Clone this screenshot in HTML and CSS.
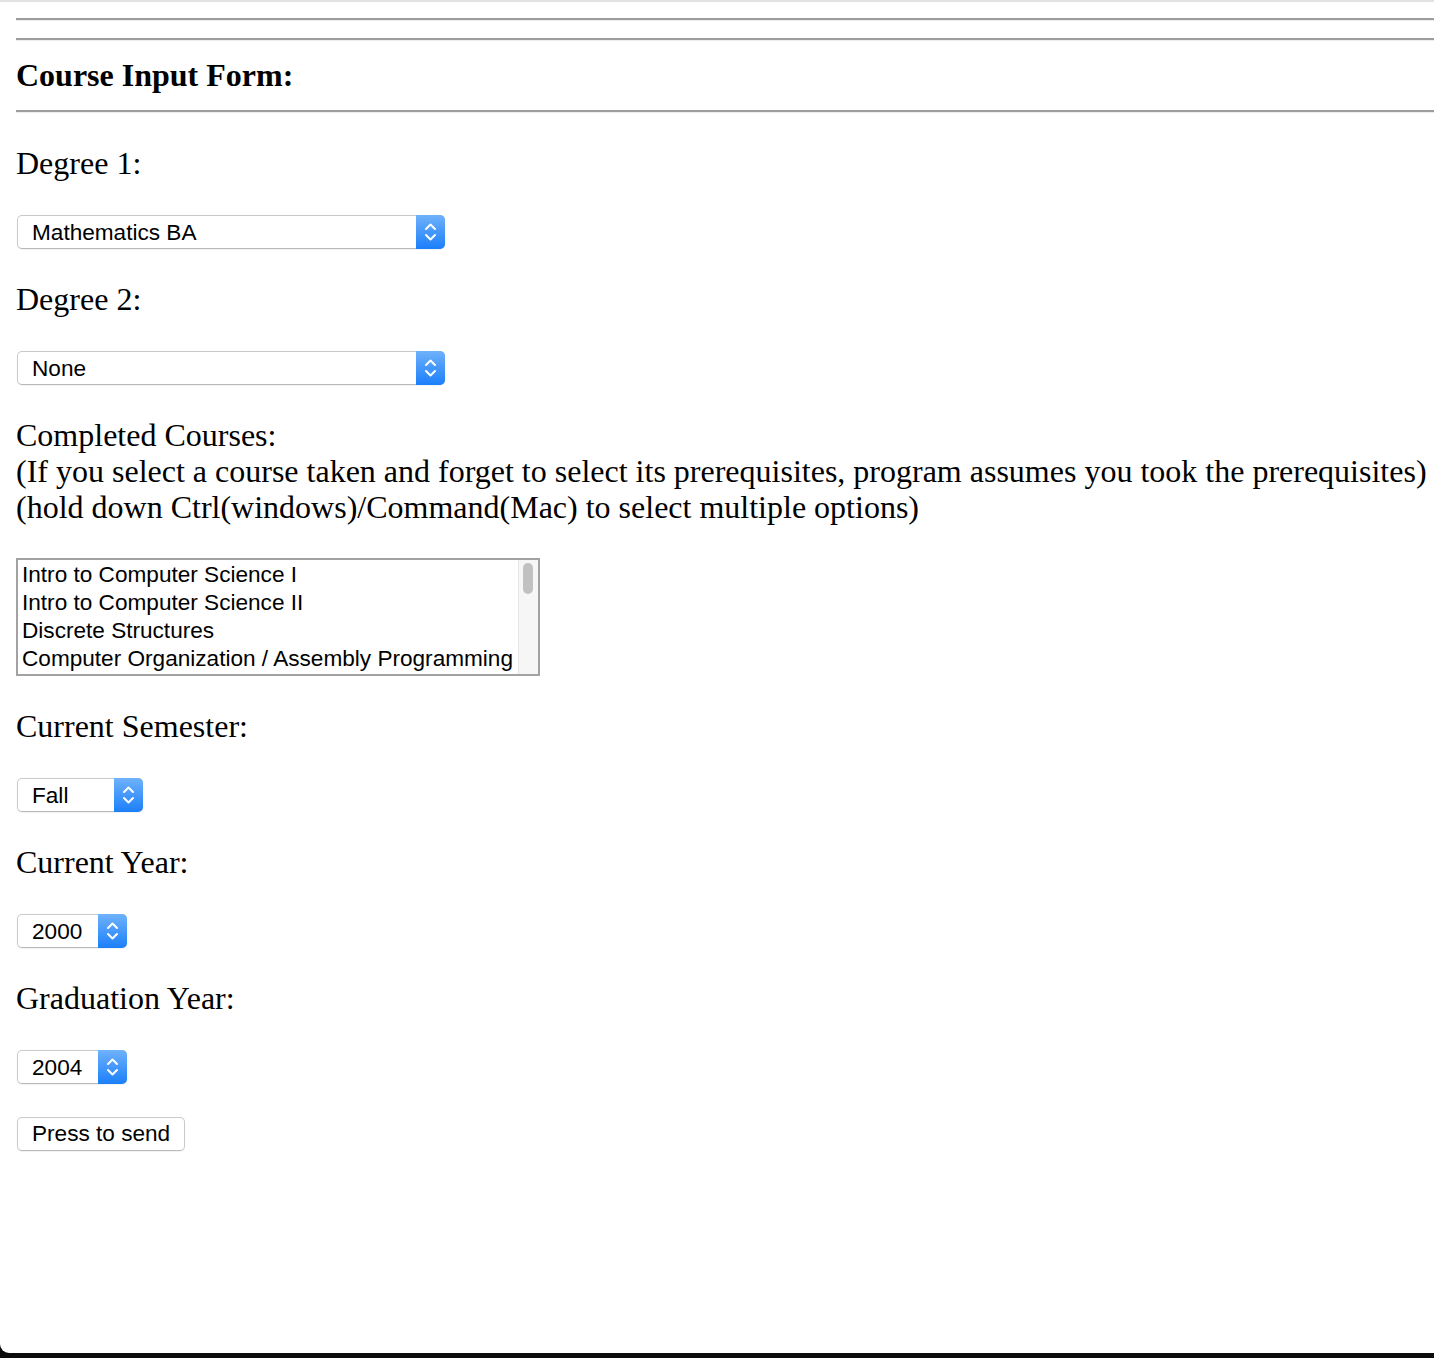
FILE: index.html
```html
<!DOCTYPE html>
<html lang="en">
<head>
<meta charset="utf-8">
<title>Course Input Form</title>
<link rel="stylesheet" href="styles.css">
</head>
<body>
<div class="page">
  <div class="content">
    <hr class="rule rule-first">
    <hr class="rule rule-second">
    <h3 class="title">Course Input Form:</h3>
    <hr class="rule">
    <form class="form" onsubmit="return false;">
      <p class="label">Degree 1:</p>
      <span class="select w-degree">
        <select class="select-native" name="degree1">
          <option>Mathematics BA</option>
          <option>Computer Science BS</option>
        </select>
        <span class="select-arrow"><svg width="29" height="34" viewBox="0 0 29 34"><polyline points="10,14 14.5,9.5 19,14" /><polyline points="10,20 14.5,24.5 19,20" /></svg></span>
      </span>
      <p class="label">Degree 2:</p>
      <span class="select w-degree">
        <select class="select-native" name="degree2">
          <option>None</option>
          <option>Mathematics BA</option>
        </select>
        <span class="select-arrow"><svg width="29" height="34" viewBox="0 0 29 34"><polyline points="10,14 14.5,9.5 19,14" /><polyline points="10,20 14.5,24.5 19,20" /></svg></span>
      </span>
      <p class="label">Completed Courses:<br>(If you select a course taken and forget to select its prerequisites, program assumes you took the prerequisites)<br>(hold down Ctrl(windows)/Command(Mac) to select multiple options)</p>
      <div class="listbox" role="listbox" aria-multiselectable="true" tabindex="0">
        <div class="listbox-options">
          <div class="listbox-option" role="option">Intro to Computer Science I</div>
          <div class="listbox-option" role="option">Intro to Computer Science II</div>
          <div class="listbox-option" role="option">Discrete Structures</div>
          <div class="listbox-option" role="option">Computer Organization / Assembly Programming</div>
        </div>
        <div class="listbox-scroll" aria-hidden="true"><div class="listbox-thumb"></div></div>
      </div>
      <p class="label">Current Semester:</p>
      <span class="select w-sem">
        <select class="select-native" name="semester">
          <option>Fall</option>
          <option>Spring</option>
        </select>
        <span class="select-arrow"><svg width="29" height="34" viewBox="0 0 29 34"><polyline points="10,14 14.5,9.5 19,14" /><polyline points="10,20 14.5,24.5 19,20" /></svg></span>
      </span>
      <p class="label">Current Year:</p>
      <span class="select w-year">
        <select class="select-native" name="year">
          <option>2000</option>
        </select>
        <span class="select-arrow"><svg width="29" height="34" viewBox="0 0 29 34"><polyline points="10,14 14.5,9.5 19,14" /><polyline points="10,20 14.5,24.5 19,20" /></svg></span>
      </span>
      <p class="label">Graduation Year:</p>
      <span class="select w-year">
        <select class="select-native" name="gradyear">
          <option>2004</option>
        </select>
        <span class="select-arrow"><svg width="29" height="34" viewBox="0 0 29 34"><polyline points="10,14 14.5,9.5 19,14" /><polyline points="10,20 14.5,24.5 19,20" /></svg></span>
      </span>
      <button class="button" type="submit">Press to send</button>
    </form>
  </div>
</div>
</body>
</html>
```
FILE: styles.css
```css
html {
  background: #0c0c0c;
  height: 100%;
}
body {
  margin: 0;
  height: 100%;
  overflow: hidden;
  font-family: "Liberation Serif", "Times New Roman", serif;
  color: #000;
}
.page {
  height: 1351px;
  background: #fff;
  border-top: 2px solid #e2e2e2;
  border-bottom-left-radius: 9px;
  overflow: hidden;
}
.content {
  padding-left: 16px;
}
.rule {
  margin: 0;
  border: 0;
  height: 0;
  border-top: 2px solid #9d9d9d;
  border-bottom: 1px solid #ececec;
}
.rule-first {
  margin-top: 16px;
}
.rule-second {
  margin-top: 17px;
}
.title {
  margin: 16px 0 17px;
  font-size: 32px;
  line-height: 36px;
  font-weight: bold;
}
.form {
  display: flex;
  flex-direction: column;
  align-items: flex-start;
  gap: 33px;
  padding-top: 32px;
}
.label {
  margin: 0;
  font-size: 32px;
  line-height: 36px;
  white-space: nowrap;
}
.select {
  position: relative;
  display: inline-flex;
  height: 34px;
  margin: 1px 0 -1px 1px;
  box-sizing: border-box;
  border: 1px solid #c9c9c9;
  border-bottom-color: #b9b9b9;
  border-radius: 5px;
  background: #fff;
  box-shadow: 0 1px 1px rgba(0, 0, 0, 0.06);
}
.w-degree { width: 428px; }
.w-sem { width: 126px; }
.w-year { width: 110px; }
.select-native {
  appearance: none;
  -webkit-appearance: none;
  border: 0;
  background: transparent;
  width: 100%;
  height: 100%;
  margin: 0;
  padding: 0 30px 0 14px;
  font-family: "Liberation Sans", Arial, sans-serif;
  font-size: 22.6px;
  color: #000;
  outline: none;
}
.select-arrow {
  position: absolute;
  top: -1px;
  right: -1px;
  bottom: -1px;
  width: 29px;
  border-radius: 0 5px 5px 0;
  background: linear-gradient(#6fb2fb, #1b7ffa);
  pointer-events: none;
}
.select-arrow svg {
  display: block;
  fill: none;
  stroke: #fff;
  stroke-width: 2;
  stroke-linecap: round;
  stroke-linejoin: round;
}
.listbox {
  display: flex;
  width: 524px;
  height: 118px;
  margin: 0 0 -1px;
  box-sizing: border-box;
  border: 2px solid #a2a2a2;
  font-family: "Liberation Sans", Arial, sans-serif;
  font-size: 22.6px;
  color: #000;
  background: #fff;
  outline: none;
  overflow: hidden;
}
.listbox-options {
  flex: 1;
  min-width: 0;
  padding-top: 1px;
}
.listbox-option {
  padding: 0 4px;
  line-height: 28px;
  white-space: nowrap;
}
.listbox-scroll {
  width: 20px;
  flex: none;
  background: #f6f6f6;
  border-left: 1px solid #e6e6e6;
  padding: 3px 5px 0 4px;
  box-sizing: border-box;
}
.listbox-thumb {
  height: 31px;
  border-radius: 6px;
  background: #c1c1c1;
}
.button {
  margin: 1px 0 0 1px;
  height: 34px;
  padding: 0 14px;
  border: 1px solid #c9c9c9;
  border-bottom-color: #b9b9b9;
  border-radius: 5px;
  background: #fff;
  box-shadow: 0 1px 1px rgba(0, 0, 0, 0.06);
  font-family: "Liberation Sans", Arial, sans-serif;
  font-size: 22.6px;
  color: #000;
}
```
